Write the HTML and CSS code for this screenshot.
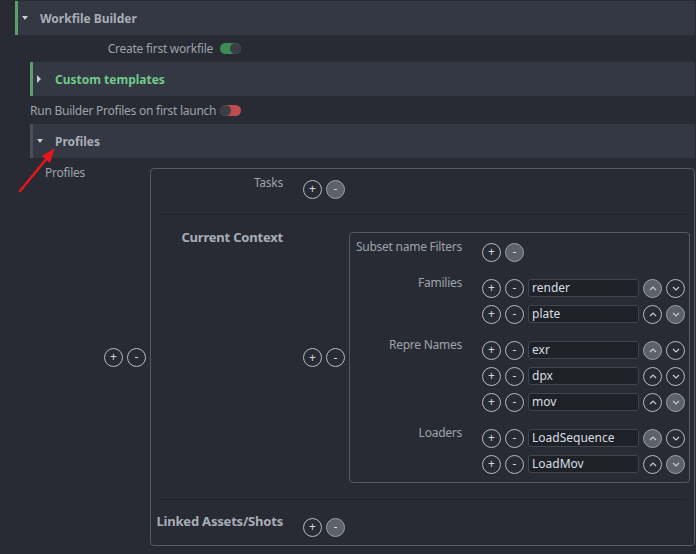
FILE: index.html
```html
<!DOCTYPE html>
<html lang="en">

<head>
    <meta charset="UTF-8">
    <meta name="viewport" content="width=device-width, initial-scale=1.0">
    <title>Workfile Builder</title>
    <link rel="stylesheet" href="styles.css">
</head>

<body>
    <div class="page">
        <div class="section-head accent">
            <span class="caret"><span class="tri-down"></span></span>
            <span class="head-title">Workfile Builder</span>
        </div>
        <div class="section-body">
            <div class="toggle-row first">
                <span class="toggle-label">Create first workfile</span>
                <span class="toggle on"><span class="knob"></span></span>
            </div>

            <div class="section-head accent">
                <span class="caret"><span class="tri-right"></span></span>
                <span class="head-title green">Custom templates</span>
            </div>

            <div class="toggle-row second">
                <span class="toggle-label">Run Builder Profiles on first launch</span>
                <span class="toggle off"><span class="knob"></span></span>
            </div>

            <div class="section-head muted">
                <span class="caret"><span class="tri-down"></span></span>
                <span class="head-title">Profiles</span>
            </div>

            <div class="profiles">
                <span class="plain-label">Profiles</span>
                <div class="btn-pair">
                    <span class="cbtn">+</span><span class="cbtn">-</span>
                </div>

                <div class="profile-box">
                    <!-- tasks -->
                    <div class="field">
                        <span class="field-label">Tasks</span>
                        <div class="list-row">
                            <span class="cbtn">+</span><span class="cbtn off">-</span>
                        </div>
                    </div>

                    <div class="sep"></div>

                    <!-- current context -->
                    <div class="field context">
                        <span class="field-label bold">Current Context</span>
                        <div class="btn-pair">
                            <span class="cbtn">+</span><span class="cbtn">-</span>
                        </div>
                        <div class="inner-box">
                            <div class="group">
                                <span class="group-label">Subset name Filters</span>
                                <div class="rows">
                                    <div class="list-row">
                                        <span class="cbtn">+</span><span class="cbtn off">-</span>
                                    </div>
                                </div>
                            </div>

                            <div class="group">
                                <span class="group-label">Families</span>
                                <div class="rows">
                                    <div class="list-row">
                                        <span class="cbtn">+</span><span class="cbtn">-</span>
                                        <span class="text-input">render</span>
                                        <span class="cbtn off"><svg class="chev" viewBox="0 0 8 5"><polyline points="1,4 4,1 7,4"/></svg></span>
                                        <span class="cbtn"><svg class="chev" viewBox="0 0 8 5"><polyline points="1,1 4,4 7,1"/></svg></span>
                                    </div>
                                    <div class="list-row">
                                        <span class="cbtn">+</span><span class="cbtn">-</span>
                                        <span class="text-input">plate</span>
                                        <span class="cbtn"><svg class="chev" viewBox="0 0 8 5"><polyline points="1,4 4,1 7,4"/></svg></span>
                                        <span class="cbtn off"><svg class="chev" viewBox="0 0 8 5"><polyline points="1,1 4,4 7,1"/></svg></span>
                                    </div>
                                </div>
                            </div>

                            <div class="group">
                                <span class="group-label">Repre Names</span>
                                <div class="rows">
                                    <div class="list-row">
                                        <span class="cbtn">+</span><span class="cbtn">-</span>
                                        <span class="text-input">exr</span>
                                        <span class="cbtn off"><svg class="chev" viewBox="0 0 8 5"><polyline points="1,4 4,1 7,4"/></svg></span>
                                        <span class="cbtn"><svg class="chev" viewBox="0 0 8 5"><polyline points="1,1 4,4 7,1"/></svg></span>
                                    </div>
                                    <div class="list-row">
                                        <span class="cbtn">+</span><span class="cbtn">-</span>
                                        <span class="text-input">dpx</span>
                                        <span class="cbtn"><svg class="chev" viewBox="0 0 8 5"><polyline points="1,4 4,1 7,4"/></svg></span>
                                        <span class="cbtn"><svg class="chev" viewBox="0 0 8 5"><polyline points="1,1 4,4 7,1"/></svg></span>
                                    </div>
                                    <div class="list-row">
                                        <span class="cbtn">+</span><span class="cbtn">-</span>
                                        <span class="text-input">mov</span>
                                        <span class="cbtn"><svg class="chev" viewBox="0 0 8 5"><polyline points="1,4 4,1 7,4"/></svg></span>
                                        <span class="cbtn off"><svg class="chev" viewBox="0 0 8 5"><polyline points="1,1 4,4 7,1"/></svg></span>
                                    </div>
                                </div>
                            </div>

                            <div class="group">
                                <span class="group-label">Loaders</span>
                                <div class="rows">
                                    <div class="list-row">
                                        <span class="cbtn">+</span><span class="cbtn">-</span>
                                        <span class="text-input">LoadSequence</span>
                                        <span class="cbtn off"><svg class="chev" viewBox="0 0 8 5"><polyline points="1,4 4,1 7,4"/></svg></span>
                                        <span class="cbtn"><svg class="chev" viewBox="0 0 8 5"><polyline points="1,1 4,4 7,1"/></svg></span>
                                    </div>
                                    <div class="list-row">
                                        <span class="cbtn">+</span><span class="cbtn">-</span>
                                        <span class="text-input">LoadMov</span>
                                        <span class="cbtn"><svg class="chev" viewBox="0 0 8 5"><polyline points="1,4 4,1 7,4"/></svg></span>
                                        <span class="cbtn off"><svg class="chev" viewBox="0 0 8 5"><polyline points="1,1 4,4 7,1"/></svg></span>
                                    </div>
                                </div>
                            </div>
                        </div>
                    </div>

                    <div class="sep low"></div>

                    <!-- linked -->
                    <div class="field">
                        <span class="field-label bold">Linked Assets/Shots</span>
                        <div class="list-row">
                            <span class="cbtn">+</span><span class="cbtn off">-</span>
                        </div>
                    </div>
                </div>
            </div>
        </div>
    </div>

    <!-- red annotation arrow -->
    <svg class="pointer" width="696" height="554" viewBox="0 0 696 554">
        <line x1="20" y1="191" x2="48" y2="157" stroke="#e8151c" stroke-width="2.5" stroke-linecap="round"/>
        <polygon points="55,148 42,156 50,163" fill="#e8151c"/>
    </svg>
</body>

</html>
```

FILE: styles.css
```css
body {
    margin: 0;
    background-color: #282b33;
    font-family: "Noto Sans", "Open Sans", sans-serif;
    font-size: 12px;
    letter-spacing: -0.25px;
    color: #9ea3ab;
}

.page {
    padding: 1px 1px 0 15px;
}

.section-head {
    display: flex;
    align-items: center;
    height: 34px;
    background-color: #333842;
    border-left: 3px solid #5aa06a;
    padding-left: 4px;
}

.section-head.muted {
    border-left-color: #4b4f57;
}

.caret {
    width: 8px;
    margin-right: 10px;
    display: flex;
    align-items: center;
}

.tri-down {
    width: 0;
    height: 0;
    border-left: 3.5px solid transparent;
    border-right: 3.5px solid transparent;
    border-top: 4px solid #c9cdd3;
}

.tri-right {
    width: 0;
    height: 0;
    border-top: 4px solid transparent;
    border-bottom: 4px solid transparent;
    border-left: 4px solid #c9cdd3;
}

.head-title {
    font-size: 12px;
    font-weight: bold;
    letter-spacing: 0;
    color: #a9aeb6;
}

.head-title.green {
    color: #72c98c;
}

.section-body {
    padding-left: 15px;
}

.toggle-row {
    display: flex;
    align-items: center;
    gap: 7px;
}

.toggle-row.first {
    height: 27px;
}

.toggle-row.second {
    height: 28px;
}

.toggle-label {
    width: 183px;
    text-align: right;
    white-space: nowrap;
}

.toggle {
    width: 21px;
    height: 11px;
    border-radius: 6px;
    display: flex;
    align-items: center;
}

.toggle.on {
    background-color: #3f8c52;
    justify-content: flex-end;
}

.toggle.off {
    background-color: #c04a4e;
    justify-content: flex-start;
}

.knob {
    width: 11px;
    height: 11px;
    border-radius: 50%;
    background-color: #3b3e45;
}

.profiles {
    display: flex;
    align-items: center;
    margin-top: 10px;
    padding-left: 15px;
}

.plain-label {
    width: 59px;
    align-self: flex-start;
    margin-top: -2px;
    line-height: 14px;
}

.btn-pair {
    display: flex;
    gap: 4px;
    margin-right: 4px;
}

.cbtn {
    box-sizing: border-box;
    width: 19px;
    height: 19px;
    border: 1px solid #b7bbc2;
    border-radius: 50%;
    display: flex;
    align-items: center;
    justify-content: center;
    color: #d5d9de;
    font-size: 12px;
    letter-spacing: 0;
    line-height: 1;
    flex: none;
}

.cbtn.off {
    background-color: #5d6169;
    border-color: #9da1a8;
}

.chev {
    width: 8px;
    height: 5px;
    fill: none;
    stroke: #c7ccd3;
    stroke-width: 1.2;
}

.profile-box {
    flex: 1;
    box-sizing: border-box;
    border: 1px solid #565a62;
    border-radius: 4px;
    padding: 7px 4px 5px 4px;
}

.field {
    display: flex;
    gap: 20px;
}

.field-label {
    width: 128px;
    text-align: right;
    white-space: nowrap;
    line-height: 14px;
    flex: none;
}

.field-label.bold {
    font-size: 13px;
    font-weight: bold;
    letter-spacing: -0.2px;
    color: #a8aeb7;
}

.list-row {
    display: flex;
    align-items: center;
    gap: 4px;
    height: 26px;
}

.sep {
    height: 1px;
    background-color: #1e2126;
    margin: 12px 4px 0 5px;
}

.sep.low {
    margin-top: 16px;
    margin-bottom: 14px;
}

.field.context {
    margin-top: 17px;
    align-items: center;
    gap: 0;
}

.field.context .field-label {
    align-self: flex-start;
    margin-top: -2px;
    margin-right: 20px;
}

.inner-box {
    flex: 1;
    border: 1px solid #565a62;
    border-radius: 4px;
    padding: 6px 4px 5px 4px;
    display: flex;
    flex-direction: column;
    gap: 10px;
}

.group {
    display: flex;
    gap: 20px;
}

.group-label {
    width: 108px;
    text-align: right;
    white-space: nowrap;
    line-height: 14px;
    padding-top: 1px;
    flex: none;
}

.text-input {
    box-sizing: border-box;
    width: 111px;
    height: 18px;
    background-color: #1e2127;
    border: 1px solid #41454c;
    border-radius: 3px;
    color: #d9dde2;
    padding-left: 3px;
    letter-spacing: 0;
    line-height: 16px;
}

.pointer {
    position: absolute;
    left: 0;
    top: 0;
    pointer-events: none;
}
```
